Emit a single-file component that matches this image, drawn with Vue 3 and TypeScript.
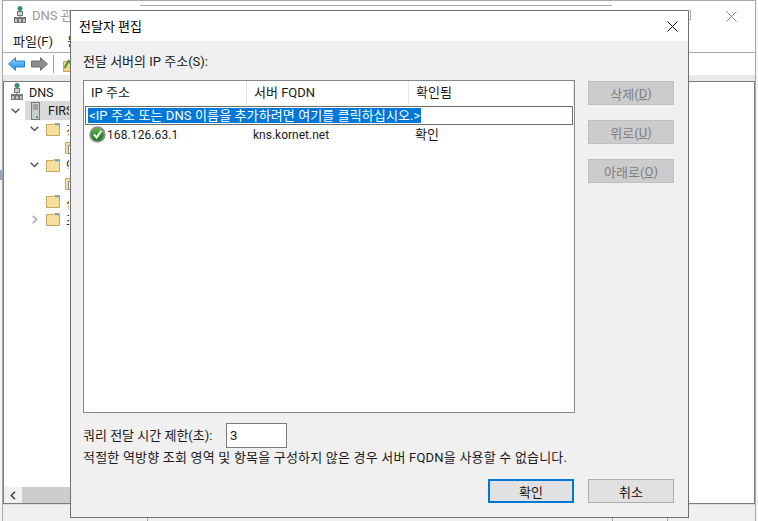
<script setup lang="ts">
const columns = [
  { label: 'IP 주소', width: 163 },
  { label: '서버 FQDN', width: 162 },
  { label: '확인됨', width: 165 },
]
const sideButtons = [
  { label: '삭제', key: 'D' },
  { label: '위로', key: 'U' },
  { label: '아래로', key: 'O' },
]
const treeRows = [
  { level: 1, arrow: 'down', id: 'a', text: '정방향 조회 영역', doc: false },
  { level: 2, arrow: '', id: 'b', text: '', doc: true },
  { level: 1, arrow: 'down', id: 'c', text: '역방향 조회 영역', doc: false },
  { level: 2, arrow: '', id: 'd', text: '', doc: true },
  { level: 1, arrow: '', id: 'e', text: '신뢰 지점', doc: false },
  { level: 1, arrow: 'right', id: 'f', text: '조건부 전달자', doc: false },
]
</script>

<template>
  <div class="desk">
    <div class="desk-icon"></div>
    <div class="back-window back-strip"></div>
    <div class="main-window">
      <div class="title-bar">
        <svg class="app-icon" width="12" height="17" viewBox="0 0 12 17">
          <circle cx="6" cy="2.600" r="2.500" fill="#2e8f58" />
          <circle cx="5.500" cy="2" r="1.100" fill="#3b8ee0" />
          <rect x="3.500" y="5.500" width="5" height="4" fill="#cfcfcf" stroke="#777" />
          <path d="M6 9.500v2M0 11.500h12" stroke="#777" fill="none" />
          <rect x="0.500" y="12.500" width="3" height="4" fill="#c4c4c4" stroke="#777" />
          <rect x="4.500" y="12.500" width="3" height="4" fill="#c4c4c4" stroke="#777" />
          <rect x="8.500" y="12.500" width="3" height="4" fill="#c4c4c4" stroke="#777" />
        </svg>
        <span class="app-title">DNS 관</span>
        <svg class="main-close" width="11" height="11" viewBox="0 0 11 11">
          <path d="M0.500 0.500l10 10M10.500 0.500l-10 10" stroke="#8a8a8a" fill="none" />
        </svg>
      </div>
      <div class="menu-bar"><span>파일(F)</span><span class="menu-cut">동</span></div>
      <div class="tool-bar">
        <svg width="17" height="14" viewBox="0 0 17 14">
          <defs>
            <linearGradient id="blueArrow" x1="0" y1="0" x2="0" y2="1">
              <stop offset="0" stop-color="#8fd0fa" />
              <stop offset="1" stop-color="#1f8fe6" />
            </linearGradient>
          </defs>
          <path d="M0.500 7L7.500 0.700V4h9v6h-9v3.300z" fill="url(#blueArrow)" stroke="#2a86cf" />
        </svg>
        <svg width="17" height="14" viewBox="0 0 17 14">
          <path d="M16.500 7L9.500 0.700V4h-9v6h9v3.300z" fill="#8c8c8c" stroke="#6f6f6f" />
        </svg>
        <i class="tool-sep"></i>
        <svg width="7" height="15" viewBox="0 0 7 15">
          <path d="M0.500 4.500h13v10H0.500z" fill="#f3d68e" stroke="#c9a653" />
          <path d="M1.500 11l4-7 2.500 2.500" fill="none" stroke="#3f9a3f" stroke-width="2" />
        </svg>
      </div>
      <div class="panes">
        <div class="tree-pane">
          <div class="tree-scroll">
            <div class="tree-row root">
              <svg width="12" height="17" viewBox="0 0 12 17">
                <circle cx="6" cy="2.600" r="2.500" fill="#2e8f58" />
                <circle cx="5.500" cy="2" r="1.100" fill="#3b8ee0" />
                <rect x="3.500" y="5.500" width="5" height="4" fill="#cfcfcf" stroke="#777" />
                <path d="M6 9.500v2M0 11.500h12" stroke="#777" fill="none" />
                <rect x="0.500" y="12.500" width="3" height="4" fill="#c4c4c4" stroke="#777" />
                <rect x="4.500" y="12.500" width="3" height="4" fill="#c4c4c4" stroke="#777" />
                <rect x="8.500" y="12.500" width="3" height="4" fill="#c4c4c4" stroke="#777" />
              </svg>
              <span class="root-label">DNS</span>
            </div>
            <div class="tree-row server">
              <svg width="9" height="6" viewBox="0 0 9 6">
                <path d="M0.700 0.700L4.500 4.500l3.800-3.800" fill="none" stroke="#555" stroke-width="1.500" />
              </svg>
              <div class="server-sel">
                <svg width="9" height="18" viewBox="0 0 9 18">
                  <rect x="0.500" y="0.500" width="8" height="17" fill="#c8ccd0" stroke="#7a7a7a" />
                  <path d="M2 3h5M2 5h5M2 7h5" stroke="#777" />
                  <rect x="5" y="14" width="2" height="2" fill="#37b34a" />
                </svg>
                <span class="server-name">FIRS</span>
              </div>
            </div>
            <div
              v-for="row in treeRows"
              :key="row.id"
              class="tree-row folder-row"
              :class="`level-${row.level}`"
            >
              <span class="chev-slot">
                <svg v-if="row.arrow === 'down'" width="9" height="6" viewBox="0 0 9 6">
                  <path d="M0.700 0.700L4.500 4.500l3.800-3.800" fill="none" stroke="#555" stroke-width="1.500" />
                </svg>
                <svg v-if="row.arrow === 'right'" class="chev-right" width="6" height="9" viewBox="0 0 6 9">
                  <path d="M0.700 0.700L4.500 4.500 0.700 8.300" fill="none" stroke="#a6a6a6" stroke-width="1.500" />
                </svg>
              </span>
              <svg width="14" height="13" viewBox="0 0 14 13">
                <path d="M0.500 12.500V1.500h7l1-1h5v12z" fill="#f6de9e" stroke="#c8a75a" />
                <path d="M9 1.500h4" stroke="#58a5dc" stroke-width="1.500" />
                <template v-if="row.doc">
                  <rect x="3.500" y="4.500" width="10" height="8" fill="#fff" stroke="#8a8a8a" />
                  <path d="M5 6.500h7M5 8.500h7M5 10.500h7" stroke="#8a8a8a" />
                </template>
              </svg>
              <span v-if="row.text" class="folder-text">{{ row.text.charAt(0) }}</span>
            </div>
          </div>
          <div class="h-scroll">
            <span class="h-arrow">
              <svg width="6" height="9" viewBox="0 0 6 9">
                <path d="M5 0.700L1.300 4.500 5 8.300" fill="none" stroke="#444" stroke-width="1.600" />
              </svg>
            </span>
            <span class="h-thumb"></span>
          </div>
        </div>
        <div class="list-pane"></div>
      </div>
      <div class="status-bar"><i class="st st-a"></i><i class="st st-b"></i><i class="st st-c"></i></div>
    </div>

    <div class="dialog">
      <div class="dlg-title">
        <span>전달자 편집</span>
        <svg width="11" height="11" viewBox="0 0 11 11">
          <path d="M0.500 0.500l10 10M10.500 0.500l-10 10" stroke="#111" fill="none" />
        </svg>
      </div>
      <div class="dlg-body">
        <div class="list-label">전달 서버의 IP 주소(S):</div>
        <div class="list-area">
          <div class="table">
            <div class="thead">
              <div v-for="col in columns" :key="col.label" class="th" :style="{ width: col.width + 'px' }">
                {{ col.label }}
              </div>
            </div>
            <div class="edit-row"><span>&lt;IP 주소 또는 DNS 이름을 추가하려면 여기를 클릭하십시오.&gt;</span></div>
            <div class="data-row">
              <div class="cell ip">
                <svg width="17" height="17" viewBox="0 0 17 17">
                  <defs>
                    <linearGradient id="okFill" x1="0" y1="0" x2="0" y2="1">
                      <stop offset="0" stop-color="#58b848" />
                      <stop offset="1" stop-color="#0d7a12" />
                    </linearGradient>
                  </defs>
                  <circle cx="8.500" cy="8.500" r="8.200" fill="#8e8e8e" />
                  <circle cx="8.500" cy="8.500" r="6.300" fill="url(#okFill)" />
                  <path d="M5 8.500l2.600 3L12.200 4.800" fill="none" stroke="#fff" stroke-width="2" />
                </svg>
                <span class="ip-text">168.126.63.1</span>
              </div>
              <div class="cell fqdn">kns.kornet.net</div>
              <div class="cell ok">확인</div>
            </div>
          </div>
          <div class="side-buttons">
            <div v-for="b in sideButtons" :key="b.key" class="btn disabled">
              {{ b.label }}(<u>{{ b.key }}</u>)
            </div>
          </div>
        </div>
        <div class="timeout-row">
          <span class="timeout-label">쿼리 전달 시간 제한(초):</span>
          <div class="timeout-input">3</div>
        </div>
        <div class="note">적절한 역방향 조회 영역 및 항목을 구성하지 않은 경우 서버 FQDN을 사용할 수 없습니다.</div>
        <div class="foot">
          <div class="btn primary">확인</div>
          <div class="btn">취소</div>
        </div>
      </div>
    </div>
  </div>
</template>

<style>
html, body { margin: 0; background: #f4f4f4; }
</style>

<style scoped>
.desk {
  position: relative;
  width: 758px;
  height: 521px;
  overflow: hidden;
  background: #f4f4f4;
  font-family: Roboto, "Noto Sans CJK KR", sans-serif;
  font-size: 13px;
  color: #1a1a1a;
}
.desk-icon {
  position: absolute;
  left: 0;
  top: 170px;
  width: 2px;
  height: 10px;
  background: #8fa6c4;
}
.main-window {
  position: absolute;
  left: 2px;
  top: 0;
  width: 754px;
  height: 521px;
  box-sizing: border-box;
  background: #fff;
  border-top: 1px solid #a8a8a8;
  border-left: 1px solid #a8a8a8;
  border-right: 1px solid #a8a8a8;
  display: flex;
  flex-direction: column;
}
.back-strip {
  position: absolute;
  z-index: 1;
  left: 140px;
  top: 5px;
  width: 551px;
  height: 15px;
  box-sizing: border-box;
  border: solid #a8a8a8;
  border-width: 1px 1px 1px 0;
  clip-path: polygon(0 0, 472px 0, 472px 5px, 100% 5px, 100% 100%, 0 100%);
}
.title-bar {
  height: 29px;
  box-sizing: border-box;
  padding: 0 0 3px 11px;
  display: flex;
  align-items: center;
  gap: 6px;
  flex: none;
}
.app-title { color: #9a9a9a; width: 38px; overflow: hidden; white-space: nowrap; }
.main-close { margin-left: auto; margin-right: 18px; margin-top: 4px; }
.menu-bar {
  height: 23px;
  flex: none;
  display: flex;
  align-items: center;
  gap: 14px;
  padding-left: 10px;
  padding-bottom: 2px;
  box-sizing: border-box;
  border-bottom: 1px solid #a8a8ac;
}
.menu-cut { width: 3px; overflow: hidden; }
.tool-bar {
  height: 22px;
  flex: none;
  display: flex;
  align-items: center;
  gap: 6px;
  padding-left: 5px;
}
.tool-sep { width: 1px; height: 18px; background: #a0a0a0; margin-left: -1px; margin-right: 3px; }
.panes {
  flex: 1;
  display: flex;
  min-height: 0;
  background: #e9e9e9;
  padding-top: 6px;
}
.tree-pane {
  width: 680px;
  flex: none;
  background: #fff;
  border: 1px solid #7c7c7c;
  border-width: 1px 0 1px 1px;
  display: flex;
  flex-direction: column;
}
.list-pane {
  flex: 1;
  background: #fff;
  border: 1px solid #7c7c7c;
}
.tree-scroll { flex: 1; }
.tree-row { display: flex; align-items: center; height: 18px; white-space: nowrap; }
.root { padding-left: 7px; gap: 6px; height: 19px; font-size: 12.500px; }
.root-label { margin-top: 2px; }
.server { padding-left: 7px; height: 19px; gap: 5px; font-size: 12.500px; }
.server-sel {
  display: flex;
  align-items: center;
  gap: 8px;
  background: #d9d9d9;
  width: 300px;
  height: 19px;
  padding-left: 6px;
}
.server-name { width: 21px; overflow: hidden; }
.folder-row { height: 18px; }
.level-1 { padding-left: 26px; }
.level-2 { padding-left: 45px; }
.chev-slot { width: 16px; flex: none; display: flex; align-items: center; }
.chev-right { margin-left: 2px; }
.folder-text { margin-left: 6px; width: 3px; overflow: hidden; }
.h-scroll {
  height: 16px;
  flex: none;
  background: #f0f0f0;
  display: flex;
  align-items: center;
}
.h-arrow { width: 18px; display: flex; justify-content: center; }
.h-thumb { width: 300px; height: 16px; background: #cdcdcd; }
.status-bar {
  height: 17px;
  flex: none;
  background: #f0f0f0;
  border-top: 1px solid #dcdcdc;
  box-sizing: border-box;
  display: flex;
}
.st { display: block; border-right: 1px solid #a0a0a0; }
.st-a { width: 144px; }
.st-b { width: 464px; }
.st-c { width: 54px; }

.dialog {
  position: absolute;
  z-index: 2;
  left: 70px;
  top: 10px;
  width: 619px;
  height: 508px;
  box-sizing: border-box;
  border: 1px solid #6f6f6f;
  display: flex;
  flex-direction: column;
  background: #f0f0f0;
}
.dlg-title {
  height: 30px;
  flex: none;
  background: #fff;
  display: flex;
  align-items: center;
  justify-content: space-between;
  padding: 0 10px 0 8px;
  color: #000;
}
.dlg-title span { margin-top: -2px; }
.dlg-body {
  flex: 1;
  padding: 12px 14px 14px 12px;
  display: flex;
  flex-direction: column;
}
.list-label { height: 18px; line-height: 17px; margin-bottom: 9px; }
.list-area { display: flex; gap: 13px; align-items: flex-start; }
.table {
  width: 492px;
  height: 333px;
  box-sizing: border-box;
  background: #fff;
  border: 1px solid #828790;
}
.thead { display: flex; height: 25px; }
.th {
  box-sizing: border-box;
  padding-left: 7px;
  line-height: 24px;
  border-right: 1px solid #e5e5e5;
  height: 24px;
}
.edit-row {
  margin: 0 1px;
  height: 19px;
  box-sizing: border-box;
  border: 1px solid #6d6d6d;
  padding: 1px 2px;
  display: flex;
}
.edit-row span {
  background: #0078d7;
  color: #fff;
  line-height: 15px;
  padding: 0 1px;
  white-space: nowrap;
  letter-spacing: 0.100px;
}
.data-row { display: flex; height: 18px; align-items: center; }
.cell { white-space: nowrap; }
.ip { width: 169px; padding-left: 5px; box-sizing: border-box; display: flex; align-items: center; gap: 1px; font-size: 12px; letter-spacing: 0.100px; }
.ip-text { margin-top: 1px; }
.fqdn { width: 162px; font-size: 12px; margin-top: 1px; }
.ok { margin-top: -1px; }
.side-buttons {
  display: flex;
  flex-direction: column;
  gap: 15px;
  margin-top: 1px;
}
.btn {
  width: 86px;
  height: 24px;
  box-sizing: border-box;
  border: 1px solid #adadad;
  background: #e1e1e1;
  display: flex;
  align-items: center;
  justify-content: center;
  color: #111;
}
.btn u { text-underline-offset: 1px; }
.btn.disabled { background: #cccccc; border-color: #bfbfbf; color: #7f7f7f; }
.btn.primary { border: 2px solid #0078d7; }
.timeout-row { display: flex; align-items: center; margin-top: 10px; height: 25px; }
.timeout-label { width: 143px; flex: none; margin-top: -2px; }
.timeout-input {
  width: 61px;
  height: 25px;
  box-sizing: border-box;
  border: 1px solid #7a7a7a;
  background: #fff;
  padding-left: 3px;
  line-height: 23px;
}
.note { margin-top: 1px; height: 18px; line-height: 18px; white-space: nowrap; letter-spacing: 0.200px; }
.foot { display: flex; justify-content: flex-end; gap: 14px; margin-top: auto; }
</style>
